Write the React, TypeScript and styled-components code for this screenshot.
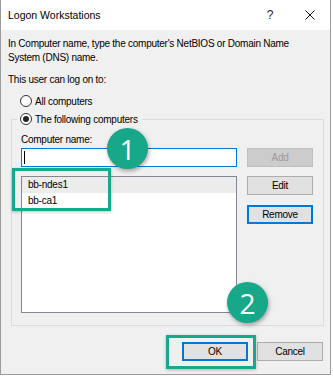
import styled, { createGlobalStyle } from "styled-components";

const GlobalStyle = createGlobalStyle`
  html, body {
    margin: 0;
    background: #ffffff;
  }
  body {
    font-family: "Liberation Sans", Arial, sans-serif;
    font-size: 10px;
    letter-spacing: -0.25px;
    color: #000;
  }
`;

const computers = ["bb-ndes1", "bb-ca1"];

const App = () => {
  return (
    <>
      <GlobalStyle />
      <Window>
        <TitleBar>
          <Title>Logon Workstations</Title>
          <TitleButton>?</TitleButton>
          <TitleButton>
            <svg width="10" height="10" viewBox="0 0 10 10">
              <path d="M0.5 0.5 L9.5 9.5 M9.5 0.5 L0.5 9.5" stroke="#111" strokeWidth="1" />
            </svg>
          </TitleButton>
        </TitleBar>
        <Body>
          <Text>
            In Computer name, type the computer's NetBIOS or Domain Name
            <br />
            System (DNS) name.
          </Text>
          <Text $gap={8}>This user can log on to:</Text>
          <RadioRow $gap={6}>
            <Radio />
            All computers
          </RadioRow>
          <GroupBox>
            <Legend>
              <RadioRow>
                <Radio $checked />
                The following computers
              </RadioRow>
            </Legend>
            <GroupGrid>
              <FieldLabel>Computer name:</FieldLabel>
              <TextBox>
                <Caret />
              </TextBox>
              <Button $disabled>Add</Button>
              <ListBox>
                {computers.map((c, i) => (
                  <ListItem key={c} $selected={i === 0}>
                    {c}
                  </ListItem>
                ))}
              </ListBox>
              <ButtonColumn>
                <Button>Edit</Button>
                <Button $default>Remove</Button>
              </ButtonColumn>
            </GroupGrid>
          </GroupBox>
          <Footer>
            <Button $default>OK</Button>
            <Button>Cancel</Button>
          </Footer>
        </Body>
        <Highlight style={{ left: 11, top: 168, width: 99, height: 43 }} />
        <Highlight style={{ left: 165, top: 335, width: 90, height: 34 }} />
        <Badge style={{ left: 106, top: 128 }}>1</Badge>
        <Badge style={{ left: 226, top: 282 }}>2</Badge>
      </Window>
    </>
  );
};

export default App;

const Window = styled.div`
  position: relative;
  width: 331px;
  height: 375px;
  box-sizing: border-box;
  border: 1px solid #9c9c9c;
  border-top: none;
  background: #f0f0f0;
  display: flex;
  flex-direction: column;
  overflow: hidden;
`;
const TitleBar = styled.div`
  height: 30px;
  flex-shrink: 0;
  display: flex;
  align-items: center;
  background: #fff;
  padding-left: 7px;
`;
const Title = styled.div`
  flex: 1;
  font-size: 10.5px;
  letter-spacing: 0;
`;
const TitleButton = styled.div`
  width: 40px;
  height: 30px;
  display: flex;
  align-items: center;
  justify-content: center;
  font-size: 12px;
  color: #222;
`;
const Body = styled.div`
  padding: 7px 7px 0 7px;
  display: flex;
  flex-direction: column;
`;
const Text = styled.div<{ $gap?: number }>`
  line-height: 14px;
  white-space: nowrap;
  margin-top: ${(p) => p.$gap ?? 0}px;
`;
const RadioRow = styled.div<{ $gap?: number }>`
  display: flex;
  align-items: center;
  gap: 3px;
  height: 16px;
  margin-top: ${(p) => p.$gap ?? 0}px;
  padding-left: 12px;
  white-space: nowrap;
`;
const Radio = styled.span<{ $checked?: boolean }>`
  width: 10px;
  height: 10px;
  border: 1px solid #333;
  border-radius: 50%;
  background: #fff;
  display: flex;
  align-items: center;
  justify-content: center;
  &::after {
    content: "";
    display: ${(p) => (p.$checked ? "block" : "none")};
    width: 6px;
    height: 6px;
    border-radius: 50%;
    background: #222;
  }
`;
const GroupBox = styled.fieldset`
  margin: 2px 0 0 3px;
  width: 313px;
  box-sizing: border-box;
  border: 1px solid #dcdcdc;
  padding: 6px 9px 12px 9px;
`;
const Legend = styled.legend`
  padding: 0 4px 0 0;
  margin-left: -4px;
  & > div {
    padding-left: 3px;
  }
`;
const GroupGrid = styled.div`
  display: grid;
  grid-template-columns: 216px 66px;
  column-gap: 10px;
  row-gap: 9px;
`;
const FieldLabel = styled.div`
  grid-column: 1 / 3;
  line-height: 14px;
  margin-bottom: -8px;
`;
const TextBox = styled.div`
  height: 19px;
  box-sizing: border-box;
  border: 1px solid #0078d7;
  background: #fff;
  display: flex;
  align-items: center;
  padding-left: 2px;
`;
const Caret = styled.span`
  width: 1px;
  height: 13px;
  background: #000;
`;
const Button = styled.div<{ $disabled?: boolean; $default?: boolean }>`
  height: 19px;
  width: 66px;
  box-sizing: border-box;
  display: flex;
  align-items: center;
  justify-content: center;
  background: ${(p) => (p.$disabled ? "#cccccc" : "#e1e1e1")};
  color: ${(p) => (p.$disabled ? "#9a9a9a" : "#000")};
  border: ${(p) => (p.$default ? "2px solid #0078d7" : p.$disabled ? "1px solid #bfbfbf" : "1px solid #adadad")};
`;
const ListBox = styled.div`
  height: 137px;
  box-sizing: border-box;
  border: 1px solid #828790;
  background: #fff;
`;
const ListItem = styled.div<{ $selected?: boolean }>`
  height: 16px;
  line-height: 16px;
  padding-left: 6px;
  background: ${(p) => (p.$selected ? "#ececec" : "transparent")};
`;
const ButtonColumn = styled.div`
  display: flex;
  flex-direction: column;
  gap: 10px;
`;
const Footer = styled.div`
  display: flex;
  justify-content: flex-end;
  gap: 9px;
  margin-top: 16px;
`;
const Highlight = styled.div`
  position: absolute;
  box-sizing: border-box;
  border: 3px solid #16a98b;
  box-shadow: 0 1px 3px rgba(0, 0, 0, 0.25);
`;
const Badge = styled.div`
  position: absolute;
  width: 41px;
  height: 41px;
  border-radius: 50%;
  background: #17a88a;
  color: #fff;
  display: flex;
  align-items: center;
  justify-content: center;
  font-family: "Open Sans", sans-serif;
  font-size: 28px;
  letter-spacing: 0;
  box-shadow: 1px 2px 4px rgba(0, 0, 0, 0.35);
`;
